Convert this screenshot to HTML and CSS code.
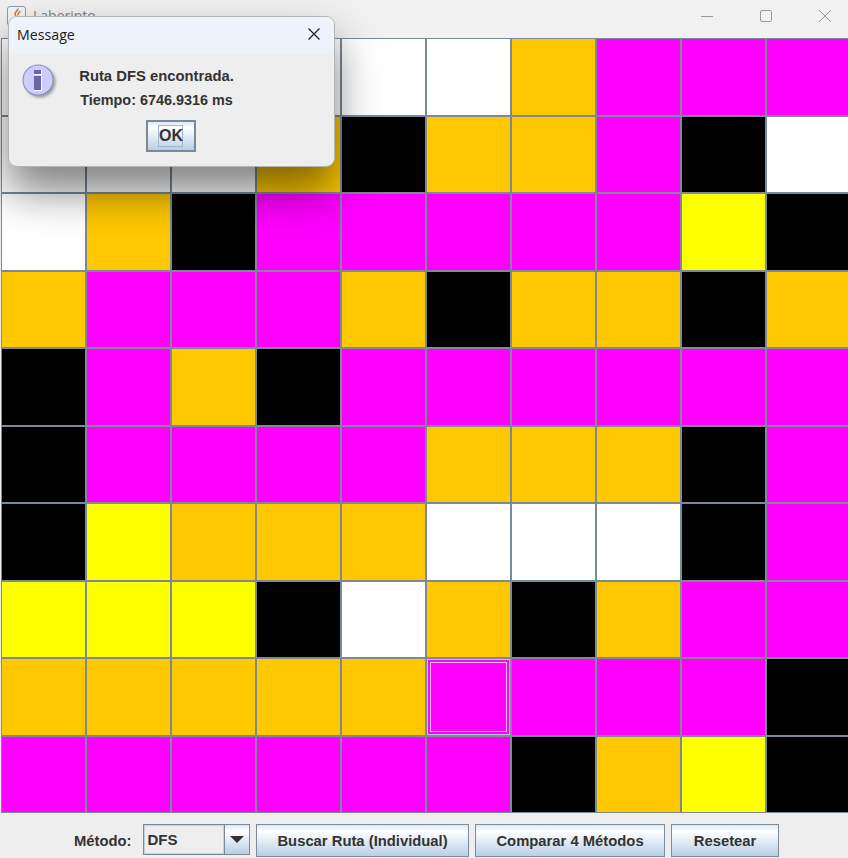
FILE: index.html
```html
<!DOCTYPE html>
<html lang="en">

<head>
    <meta charset="UTF-8" />
    <meta name="viewport" content="width=device-width, initial-scale=1" />
    <title>Laberinto</title>
    <link rel="stylesheet" href="styles.css">
</head>

<body>
    <div class="window" role="main" aria-label="Laberinto">
        <header class="titlebar">
            <svg class="app-icon" width="19" height="20" viewBox="0 0 19 20" aria-hidden="true">
                <rect x="0.500" y="0.500" width="18" height="19" rx="2.500" fill="#f4f4f4" stroke="#8a9aa8" />
                <path d="M11 2.500c.5 2-3 3-3 5.500 0 1 .5 1.500 1 2M13 5c-.5 2-2.500 2-2 4.500" fill="none" stroke="#e0793a" stroke-width="1.600" />
            </svg>
            <span class="window-title">Laberinto</span>
            <div class="window-controls">
                <svg width="14" height="14" viewBox="0 0 14 14" aria-hidden="true"><path d="M1 7.500h12" /></svg>
                <svg width="14" height="14" viewBox="0 0 14 14" aria-hidden="true"><rect x="1.500" y="1.500" width="11" height="11" rx="1.500" /></svg>
                <svg width="14" height="14" viewBox="0 0 14 14" aria-hidden="true"><path d="M1 1l12 12M13 1L1 13" /></svg>
            </div>
        </header>

        <div class="board">
            <div class="cell white"></div><div class="cell white"></div><div class="cell white"></div><div class="cell white"></div><div class="cell white"></div><div class="cell white"></div><div class="cell orange"></div><div class="cell magenta"></div><div class="cell magenta"></div><div class="cell magenta"></div>
            <div class="cell white"></div><div class="cell white"></div><div class="cell white"></div><div class="cell orange"></div><div class="cell black"></div><div class="cell orange"></div><div class="cell orange"></div><div class="cell magenta"></div><div class="cell black"></div><div class="cell white"></div>
            <div class="cell white"></div><div class="cell orange"></div><div class="cell black"></div><div class="cell magenta"></div><div class="cell magenta"></div><div class="cell magenta"></div><div class="cell magenta"></div><div class="cell magenta"></div><div class="cell yellow"></div><div class="cell black"></div>
            <div class="cell orange"></div><div class="cell magenta"></div><div class="cell magenta"></div><div class="cell magenta"></div><div class="cell orange"></div><div class="cell black"></div><div class="cell orange"></div><div class="cell orange"></div><div class="cell black"></div><div class="cell orange"></div>
            <div class="cell black"></div><div class="cell magenta"></div><div class="cell orange"></div><div class="cell black"></div><div class="cell magenta"></div><div class="cell magenta"></div><div class="cell magenta"></div><div class="cell magenta"></div><div class="cell magenta"></div><div class="cell magenta"></div>
            <div class="cell black"></div><div class="cell magenta"></div><div class="cell magenta"></div><div class="cell magenta"></div><div class="cell magenta"></div><div class="cell orange"></div><div class="cell orange"></div><div class="cell orange"></div><div class="cell black"></div><div class="cell magenta"></div>
            <div class="cell black"></div><div class="cell yellow"></div><div class="cell orange"></div><div class="cell orange"></div><div class="cell orange"></div><div class="cell white"></div><div class="cell white"></div><div class="cell white"></div><div class="cell black"></div><div class="cell magenta"></div>
            <div class="cell yellow"></div><div class="cell yellow"></div><div class="cell yellow"></div><div class="cell black"></div><div class="cell white"></div><div class="cell orange"></div><div class="cell black"></div><div class="cell orange"></div><div class="cell magenta"></div><div class="cell magenta"></div>
            <div class="cell orange"></div><div class="cell orange"></div><div class="cell orange"></div><div class="cell orange"></div><div class="cell orange"></div><div class="cell magenta focused"></div><div class="cell magenta"></div><div class="cell magenta"></div><div class="cell magenta"></div><div class="cell black"></div>
            <div class="cell magenta"></div><div class="cell magenta"></div><div class="cell magenta"></div><div class="cell magenta"></div><div class="cell magenta"></div><div class="cell magenta"></div><div class="cell black"></div><div class="cell orange"></div><div class="cell yellow"></div><div class="cell black"></div>
        </div>

        <footer class="toolbar">
            <span class="toolbar-label">Método:</span>
            <div class="combo">
                <span class="combo-value">DFS</span>
                <span class="combo-arrow"><span class="arrow-down"></span></span>
            </div>
            <button class="btn btn-search" type="button">Buscar Ruta (Individual)</button>
            <button class="btn btn-compare" type="button">Comparar 4 Métodos</button>
            <button class="btn btn-reset" type="button">Resetear</button>
        </footer>
    </div>

    <div class="dialog" role="dialog" aria-label="Message">
        <div class="dialog-title">
            <span>Message</span>
            <svg width="12" height="12" viewBox="0 0 12 12" aria-hidden="true"><path d="M0.500 0.500l11 11M11.500 0.500l-11 11" /></svg>
        </div>
        <div class="dialog-body">
            <svg class="info-icon" width="38" height="38" viewBox="0 0 38 38" aria-hidden="true">
                <defs>
                    <filter id="iconShadow" x="-20%" y="-20%" width="140%" height="140%">
                        <feGaussianBlur stdDeviation="1.500" />
                    </filter>
                </defs>
                <circle cx="18" cy="18" r="15.500" fill="#000" opacity="0.35" filter="url(#iconShadow)" />
                <circle cx="16" cy="16" r="15.500" fill="#8c8cc0" />
                <circle cx="16" cy="16" r="14.500" fill="#ccccff" />
                <rect x="12" y="6" width="8" height="5" fill="#ffffff" />
                <rect x="12" y="6" width="7" height="4" fill="#6666a8" />
                <rect x="12" y="12" width="8" height="15" fill="#ffffff" />
                <rect x="12" y="12" width="7" height="14" fill="#6666a8" />
            </svg>
            <div class="dialog-content">
                <p class="line-route">Ruta DFS encontrada.</p>
                <p class="line-time">Tiempo: 6746.9316 ms</p>
            </div>
        </div>
        <div class="dialog-actions">
            <button class="btn btn-ok" type="button"><span class="focus-ring">OK</span></button>
        </div>
    </div>
</body>

</html>
```

FILE: styles.css
```css
body {
    margin: 0;
    font-family: "Liberation Sans", Arial, sans-serif;
    background-color: #eeeeee;
    color: #333333;
    overflow: hidden;
}

.window {
    display: flex;
    flex-direction: column;
    height: 100vh;
    overflow: hidden;
}

.titlebar {
    flex: 0 0 38px;
    box-sizing: border-box;
    display: flex;
    align-items: flex-start;
    padding: 6px 0 0 7px;
    background-color: #f1f1f1;
}

.app-icon {
    margin-right: 7px;
}

.window-title {
    font-family: "Open Sans", sans-serif;
    font-size: 14px;
    line-height: 20px;
    color: #808080;
}

.window-controls {
    margin-left: auto;
    display: flex;
    gap: 45px;
    padding: 3px 16px 0 0;
}

.window-controls svg {
    fill: none;
    stroke: #999999;
    stroke-width: 1;
}

.board {
    flex: 1;
    min-height: 0;
    box-sizing: border-box;
    margin-left: 1px;
    padding: 1px 0 1px 1px;
    display: grid;
    grid-template-columns: repeat(10, 83px);
    grid-auto-rows: 1fr;
    gap: 2px;
    background-color: #7a8a99;
}

.white {
    background-color: #ffffff;
}

.orange {
    background-color: #ffc800;
}

.magenta {
    background-color: #ff00ff;
}

.black {
    background-color: #000000;
}

.yellow {
    background-color: #ffff00;
}

/* keyboard focus on a cell */
.focused {
    box-shadow: inset 0 0 0 1px #b0c8d8;
    outline: 1px solid #f0c0f8;
    outline-offset: -4px;
}

.toolbar {
    flex: 0 0 45px;
    box-sizing: border-box;
    display: flex;
    align-items: flex-start;
    padding: 11px 0 0 74px;
    background-color: #eeeeee;
}

.toolbar-label {
    font-size: 14.800px;
    font-weight: 700;
    line-height: 34px;
    margin-right: 11px;
}

.combo {
    display: flex;
    width: 107px;
    height: 31px;
    margin-right: 6px;
}

.combo-value {
    flex: 1;
    box-sizing: border-box;
    padding-left: 4px;
    border: 1px solid #7a8a99;
    box-shadow: inset 0 0 0 1px #c4d4e4;
    font-size: 15px;
    font-weight: 700;
    line-height: 29px;
    background-color: #eeeeee;
}

.combo-arrow {
    flex: 0 0 25px;
    box-sizing: border-box;
    display: flex;
    align-items: center;
    justify-content: center;
    border: 1px solid #7a8a99;
    border-left: 0;
    background: linear-gradient(#dde8f3, #ffffff 20%, #b8cfe5);
}

.arrow-down {
    border-top: 7px solid #333333;
    border-left: 7px solid transparent;
    border-right: 7px solid transparent;
}

.btn {
    box-sizing: border-box;
    height: 33px;
    padding: 1px 0 0 1px;
    border: 1px solid #7a8a99;
    font-family: inherit;
    font-size: 14.800px;
    font-weight: 700;
    color: #333333;
    background: linear-gradient(#dde8f3, #ffffff 20%, #b8cfe5);
}

.btn-search {
    width: 213px;
    margin-right: 6px;
}

.btn-compare {
    width: 190px;
    margin-right: 6px;
}

.btn-reset {
    width: 108px;
}

.dialog {
    position: absolute;
    left: 8px;
    top: 16px;
    width: 327px;
    height: 151px;
    box-sizing: border-box;
    border: 1px solid #b4b4b4;
    border-radius: 9px;
    overflow: hidden;
    background-color: #eeeeee;
    box-shadow: 0 24px 44px rgba(0, 0, 0, 0.5);
}

.dialog-title {
    height: 36px;
    box-sizing: border-box;
    display: flex;
    align-items: center;
    justify-content: space-between;
    padding: 0 14px 2px 8px;
    font-family: "Open Sans", sans-serif;
    font-size: 14.200px;
    color: #1a1a1a;
    background-color: #eef3fb;
}

.dialog-title svg {
    fill: none;
    stroke: #1a1a1a;
    stroke-width: 1.2;
}

.dialog-body {
    display: flex;
    height: 67px;
    padding: 11px 0 0 13px;
    box-sizing: border-box;
}

.info-icon {
    flex: none;
}

.dialog-content {
    width: 157px;
    margin-left: 18px;
    text-align: center;
    font-weight: 700;
    line-height: 24px;
}

.dialog-content p {
    margin: 0;
}

.line-route {
    font-size: 14.800px;
}

.line-time {
    font-size: 14.400px;
}

.dialog-actions {
    display: flex;
    justify-content: center;
    padding-right: 2px;
}

.btn-ok {
    width: 50px;
    height: 32px;
    padding: 0;
    border-width: 2px;
    display: flex;
    align-items: center;
    justify-content: center;
}

.focus-ring {
    display: block;
    width: 25px;
    box-sizing: border-box;
    border: 1px solid #a3b8cc;
    font-size: 16px;
    line-height: 20px;
}
```
